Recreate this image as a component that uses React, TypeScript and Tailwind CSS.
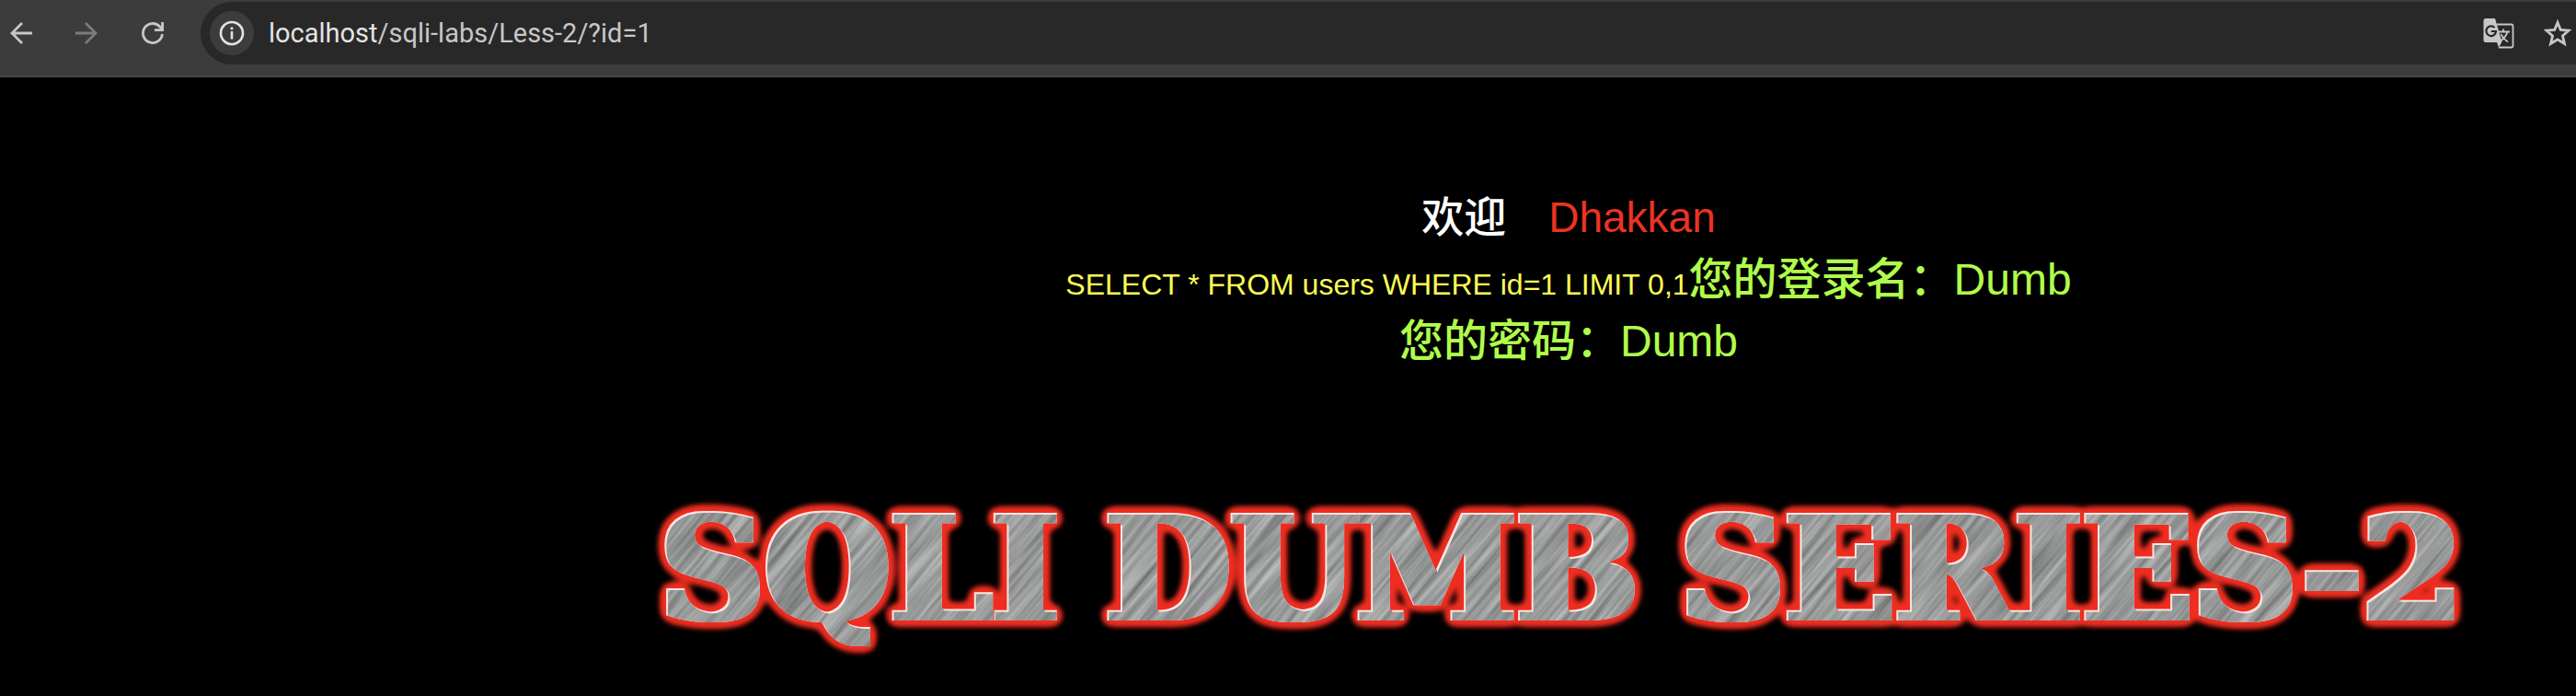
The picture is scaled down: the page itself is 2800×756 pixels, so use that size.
import type { ReactNode } from "react";

function IconButton({ label, className, children }: { label: string; className: string; children: ReactNode }) {
  return (
    <button type="button" aria-label={label} className={`flex shrink-0 items-center justify-center ${className}`}>
      {children}
    </button>
  );
}

function Toolbar() {
  return (
    <header className="flex items-start border-b-2 border-[#474747] bg-[#3c3c3c] pt-0.5 pb-3">
      <nav aria-label="Navigation" className="flex h-[68px] shrink-0 items-center gap-6 pr-[28px]">
        <IconButton label="Back" className="h-12 w-[46px] text-[#c7c7c7]">
          <svg viewBox="0 0 24 24" className="size-6" fill="none" stroke="currentColor" strokeWidth="2.8">
            <path d="M24 12H2M13 1 2 12l11 11" />
          </svg>
        </IconButton>
        <IconButton label="Forward" className="h-12 w-12 text-[#7c7c7c]">
          <svg viewBox="0 0 24 24" className="size-6" fill="none" stroke="currentColor" strokeWidth="2.8">
            <path d="M0 12h22M11 1l11 11-11 11" />
          </svg>
        </IconButton>
        <IconButton label="Reload" className="h-12 w-12 text-[#c7c7c7]">
          <svg viewBox="0 0 24 24" className="size-6" fill="none" stroke="currentColor" strokeWidth="2.8">
            <path d="M22.400 13A10.500 10.500 0 1 1 19.500 4.700L22 7.500" />
            <path d="M22.600 0v8.600H14" />
          </svg>
        </IconButton>
      </nav>
      <form className="flex h-[68px] min-w-0 flex-1 items-center rounded-l-full bg-[#282828] pr-1 pl-[10px]">
        <IconButton label="View site information" className="size-12 rounded-full bg-[#3c3c3c] text-[#e3e3e3]">
          <svg viewBox="0 0 28 28" className="size-7" fill="none" stroke="currentColor" strokeWidth="2.6">
            <circle cx="14" cy="14" r="12" />
            <path d="M14 12v8.500M14 7.500v2.800" />
          </svg>
        </IconButton>
        <div className="relative ml-4 h-12 min-w-0 flex-1 font-[Roboto,sans-serif] text-[29px] leading-[48px] font-normal">
          <div aria-hidden="true" className="whitespace-pre text-[#c7c7c7]">
            <span className="text-[#e3e3e3]">localhost</span>/sqli-labs/Less-2/?id=1
          </div>
          <input
            aria-label="Address"
            defaultValue="localhost/sqli-labs/Less-2/?id=1"
            className="absolute inset-0 w-full bg-transparent text-transparent outline-none"
          />
        </div>
        <IconButton label="Translate this page" className="mr-8 size-8 text-[#c7c7c7]">
          <svg viewBox="0 0 34 34" className="size-[34px] shrink-0">
            <path d="M15 7.500h15.500a2 2 0 0 1 2 2v21a2 2 0 0 1-2 2H17" fill="none" stroke="currentColor" strokeWidth="1.800" />
            <path d="M3 1h10l7.500 25.500L17 32.500l-2-5.500H3a2.500 2.500 0 0 1-2.500-2.500v-21A2.500 2.500 0 0 1 3 1z" fill="currentColor" />
            <path d="M12.500 11A5.300 5.300 0 1 0 14 15H8.800" fill="none" stroke="#282828" strokeWidth="2.200" />
            <path d="M16.500 15.500H29M22 12.500v3M26.500 15.500c-1 4-4 7.500-8 10.500M19.500 18c1.500 3.500 4.500 6.500 7.500 8.500" fill="none" stroke="currentColor" strokeWidth="1.800" />
          </svg>
        </IconButton>
        <IconButton label="Bookmark this page" className="size-8 text-[#c7c7c7]">
          <svg viewBox="0 0 32 32" className="size-8 shrink-0" fill="none" stroke="currentColor" strokeWidth="2.800">
            <path d="m16 4.500 3.300 8 8.700.7-6.600 5.700 2.100 8.500L16 22.800l-7.500 4.600 2.100-8.500L4 13.200l8.700-.7z" />
          </svg>
        </IconButton>
      </form>
    </header>
  );
}

function Title() {
  return (
    <svg viewBox="0 0 2000 200" className="w-[2000px] max-w-full" role="img" aria-label="SQLI DUMB SERIES-2">
      <defs>
        <g id="words" fill="#fff" fontSize="157" fontWeight="700" className="font-[DejaVu_Serif,serif]">
          <text x="12" y="152">SQLI</text>
          <text x="496" y="152">DUMB</text>
          <text x="1121" y="152">SERIES-2</text>
        </g>
        <filter id="glow" x="0" y="0" width="2000" height="200" filterUnits="userSpaceOnUse" colorInterpolationFilters="sRGB">
          <feMorphology in="SourceAlpha" operator="dilate" radius="5 1" result="body" />
          <feGaussianBlur in="body" stdDeviation="6" result="soft" />
          <feComponentTransfer in="soft" result="halo">
            <feFuncA type="linear" slope="9" intercept="-0.4" />
          </feComponentTransfer>
          <feGaussianBlur in="halo" stdDeviation="2" result="edge" />
          <feFlood floodColor="#ee2d20" />
          <feComposite in2="edge" operator="in" result="red" />
          <feFlood floodColor="#f6e6e2" />
          <feComposite in2="body" operator="in" result="light" />
          <feMerge>
            <feMergeNode in="red" />
            <feMergeNode in="light" />
          </feMerge>
        </filter>
        <filter id="face" x="0" y="0" width="2000" height="200" filterUnits="userSpaceOnUse" colorInterpolationFilters="sRGB">
          <feMorphology in="SourceGraphic" operator="dilate" radius="5 1" result="body" />
          <feOffset in="body" dx="2" dy="2" result="shifted" />
          <feComposite in="shifted" in2="body" operator="in" />
        </filter>
        <filter id="brushed" x="0" y="0" width="100%" height="100%" colorInterpolationFilters="sRGB">
          <feTurbulence type="fractalNoise" baseFrequency="0.008 0.180" numOctaves="3" seed="4" />
          <feColorMatrix values="0.420 0 0 0 0.385  0.420 0 0 0 0.390  0.420 0 0 0 0.390  0 0 0 0 1" />
        </filter>
        <mask id="letters" maskUnits="userSpaceOnUse" x="0" y="0" width="2000" height="200">
          <use href="#words" filter="url(#face)" />
        </mask>
      </defs>
      <use href="#words" filter="url(#glow)" />
      <g mask="url(#letters)">
        <g transform="rotate(-50 1000 100)">
          <rect x="-100" y="-900" width="2200" height="2000" filter="url(#brushed)" />
        </g>
      </g>
    </svg>
  );
}

export default function App() {
  return (
    <div className="min-h-screen bg-black">
      <Toolbar />
      <main className="pt-[119px] pl-[610px] text-center font-['Liberation_Sans','Noto_Sans_CJK_SC',sans-serif] leading-[67px] font-medium">
        <p className="text-[46px] text-[#eb3323]">
          <span className="mr-[46px] text-white">欢迎</span>Dhakkan
        </p>
        <p className="text-[48px] text-[#b0fc4c]">
          <span className="text-[32px] leading-none text-[#fffd54]">SELECT * FROM users WHERE id=1 LIMIT 0,1</span>您的登录名：Dumb
        </p>
        <p className="text-[48px] text-[#b0fc4c]">您的密码：Dumb</p>
        <h1 className="mt-[117px] flex justify-center">
          <Title />
        </h1>
      </main>
    </div>
  );
}
